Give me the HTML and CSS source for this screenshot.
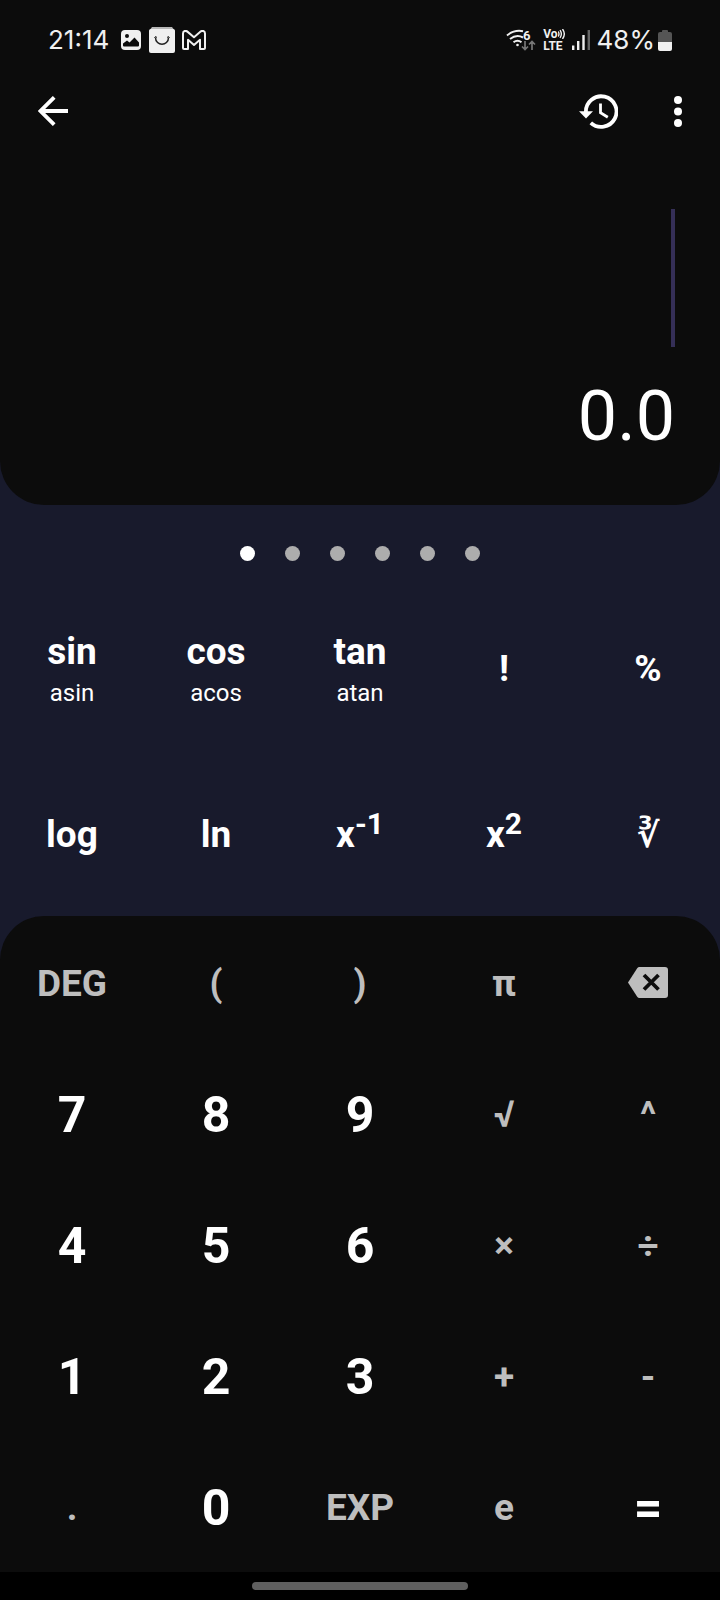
FILE: index.html
```html
<!DOCTYPE html>
<html lang="en">

<head>
  <meta charset="UTF-8">
  <meta name="viewport" content="width=device-width, initial-scale=1.0">
  <title>Calculator</title>

  <link rel="stylesheet" href="styles.css">
</head>

<body>
  <section class="screen">
    <div class="status-bar">
      <div class="status-left">
        <time>21:14</time>
        <svg class="photo-icon" width="20" height="20" viewBox="0 0 20 20">
          <rect width="20" height="20" rx="4" fill="#f0f0f0" />
          <circle cx="6" cy="6" r="2" fill="#0c0c0c" />
          <path d="M2 15.500v-2l4-3 2.500 2 5-5 4.500 5v3q0 1-1 1H3q-1 0-1-1z" fill="#0c0c0c" />
        </svg>
        <svg class="bag-icon" width="26" height="26" viewBox="0 0 26 26">
          <path d="M3 0h20l3 4H0z" fill="#b8b8b8" />
          <rect y="2" width="26" height="24" rx="2" fill="#f0f0f0" />
          <path d="M6.500 10.500c0 9 13 9 13 0" fill="none" stroke="#222" stroke-width="1.500" />
          <path d="M5.500 11l1-1.500 1.500 1M18 10.500l1.500-1 1 1.500" fill="none" stroke="#222" />
        </svg>
        <svg class="mail-icon" width="24" height="20" viewBox="0 0 24 20">
          <path d="M1 18V3.500C1 .800 3.800.300 5.400 1.600L12 7.200l6.600-5.600C20.200.300 23 .800 23 3.500V18q0 1-1 1h-4V9.800L12 15 6 9.800V19H2q-1 0-1-1z" fill="none" stroke="#f0f0f0" stroke-width="2" stroke-linejoin="round" />
        </svg>
      </div>
      <div class="status-right">
        <svg width="30" height="24" viewBox="0 0 30 24" fill="none" stroke="#f0f0f0" stroke-width="2">
          <path d="M1 7.500Q8 1.500 17 3.200M4 11q6.500-5 13-1.500M7.500 14.300q4-3 8 0" />
          <circle cx="11.500" cy="17" r="1.300" fill="#f0f0f0" stroke="none" />
          <path d="M19 13v8M16 18.500l3 3 3-3M26 22v-8M23 16.500l3-3 3 3" stroke="#777" stroke-width="1.700" />
          <text class="wifi-gen" x="17" y="12">6</text>
        </svg>
        <div class="volte">
          <span>Vo<svg width="7" height="10" viewBox="0 0 7 10" fill="none" stroke="#f0f0f0" stroke-width="1.400"><path d="M0 2.500q2 2.500 0 5M2 1.200q2.700 3.800 0 7.600M4.500 0q3.600 5 0 10" /></svg></span>
          <span>LTE</span>
        </div>
        <svg class="signal-icon" width="18" height="20" viewBox="0 0 18 20">
          <path d="M0 15.500h2.400V20H0zM5 11h2.400v9H5zM10.300 5h2.400v15h-2.400z" fill="#f0f0f0" />
          <path d="M15.600 0H18v20h-2.400z" fill="#666" />
        </svg>
        <span>48%</span>
        <svg class="battery-icon" width="14" height="21" viewBox="0 0 14 21">
          <path d="M4 2V1q0-1 1-1h4q1 0 1 1v1h2q2 0 2 2v8H0V4q0-2 2-2z" fill="#555" />
          <path d="M0 12h14v7q0 2-2 2H2q-2 0-2-2z" fill="#f0f0f0" />
        </svg>
      </div>
    </div>

    <header class="toolbar">
      <button class="icon-btn" aria-label="Back">
        <svg width="30" height="30" viewBox="0 0 30 30" fill="none" stroke="#fff" stroke-width="3.800">
          <path d="M30 15H3M16.200 1.300L2.500 15l13.700 13.700" />
        </svg>
      </button>
      <div class="toolbar-actions">
        <button class="icon-btn" aria-label="History">
          <svg width="39" height="35" viewBox="0 0 39 35" fill="none" stroke="#fff" stroke-width="3.800">
            <path d="M6.900 18A15.300 15.300 0 1 1 11.800 28.800" />
            <path d="M0 17.200h14l-7 7.300z" fill="#fff" stroke="none" />
            <path d="M21.500 9.500v9.300l7.300 4.400" stroke-width="2.800" />
          </svg>
        </button>
        <button class="icon-btn" aria-label="More options">
          <svg width="8" height="31" viewBox="0 0 8 31" fill="#fff">
            <circle cx="4" cy="4" r="4" />
            <circle cx="4" cy="15.500" r="4" />
            <circle cx="4" cy="27" r="4" />
          </svg>
        </button>
      </div>
    </header>

    <div class="display">
      <div class="expression">
        <input type="text" aria-label="Expression">
        <span class="caret"></span>
      </div>
      <output>0.0</output>
    </div>
  </section>

  <section class="functions">
    <div class="dots">
      <span class="dot active"></span>
      <span class="dot"></span>
      <span class="dot"></span>
      <span class="dot"></span>
      <span class="dot"></span>
      <span class="dot"></span>
    </div>
    <div class="function-grid">
      <button>sin<small>asin</small></button>
      <button>cos<small>acos</small></button>
      <button>tan<small>atan</small></button>
      <button>!</button>
      <button>%</button>
      <button>log</button>
      <button>ln</button>
      <button><span>x<sup>-1</sup></span></button>
      <button><span>x<sup>2</sup></span></button>
      <button class="cube-root">∛</button>
    </div>
  </section>

  <main class="keypad">
    <button>DEG</button>
    <button>(</button>
    <button>)</button>
    <button>π</button>
    <button class="delete" aria-label="Delete">
      <svg width="40" height="31" viewBox="0 0 40 31">
        <path d="M11.500 0H37q3 0 3 3v25q0 3-3 3H11.500q-1.500 0-2.300-1.200L0 15.500 9.200 1.200Q10 0 11.500 0z" fill="#bebebe" />
        <path d="M16 8l14.500 14.500M30.500 8L16 22.500" stroke="#0c0c0c" stroke-width="3.800" />
      </svg>
    </button>
    <button class="digit">7</button>
    <button class="digit">8</button>
    <button class="digit">9</button>
    <button>√</button>
    <button>^</button>
    <button class="digit">4</button>
    <button class="digit">5</button>
    <button class="digit">6</button>
    <button>×</button>
    <button>÷</button>
    <button class="digit">1</button>
    <button class="digit">2</button>
    <button class="digit">3</button>
    <button>+</button>
    <button>-</button>
    <button>.</button>
    <button class="digit">0</button>
    <button>EXP</button>
    <button>e</button>
    <button class="digit">=</button>
  </main>

  <footer class="nav-bar">
    <span class="nav-handle"></span>
  </footer>
</body>

</html>
```
FILE: styles.css
```css
* {
  box-sizing: border-box;
}

body {
  background: #181a2c;
  color: #fff;
  display: flex;
  flex-direction: column;
  font-family: Roboto, "DejaVu Sans", sans-serif;
  margin: 0;
  min-height: 100vh;
}

button {
  background: none;
  border: none;
  color: inherit;
  font-family: inherit;
  padding: 0;
}

button:hover {
  cursor: pointer;
}

svg {
  display: block;
}

/* top panel */
.screen {
  background: #0c0c0c;
  border-radius: 0 0 44px 44px;
  display: flex;
  flex: 1;
  flex-direction: column;
}

.status-bar {
  align-items: center;
  color: #f0f0f0;
  display: flex;
  font-family: Inter, sans-serif;
  font-size: 26px;
  height: 80px;
  justify-content: space-between;
  line-height: 32px;
  padding: 0 48px;
}

.status-left,
.status-right {
  align-items: center;
  display: flex;
  gap: 8px;
}

.photo-icon {
  margin-left: 4px;
}

.mail-icon {
  margin-left: -1px;
}

.status-right {
  gap: 7px;
}

.battery-icon {
  margin-left: -4px;
}

.wifi-gen {
  fill: #f0f0f0;
  font: bold 13px Roboto, sans-serif;
  stroke: none;
}

.volte {
  font: bold 12px/12px Roboto, sans-serif;
}

.volte span {
  align-items: center;
  display: flex;
}

.toolbar {
  align-items: center;
  display: flex;
  height: 62px;
  justify-content: space-between;
  padding: 0 38px;
}

.toolbar-actions {
  align-items: center;
  display: flex;
  gap: 56px;
}

.display {
  display: flex;
  flex: 1;
  flex-direction: column;
  justify-content: flex-end;
  padding: 0 45px 48px;
}

.expression {
  align-items: center;
  display: flex;
}

.expression input {
  background: none;
  border: none;
  color: #fff;
  flex: 1;
  font: 70px Roboto, sans-serif;
  min-width: 0;
  outline: none;
  text-align: right;
}

.caret {
  background: #352f57;
  height: 138px;
  width: 4px;
}

output {
  font-size: 70px;
  line-height: 82px;
  margin-top: 28px;
  text-align: right;
}

/* function pages */
.dots {
  display: flex;
  gap: 30px;
  justify-content: center;
  padding: 41px 0 23px;
}

.dot {
  background: #adadad;
  border-radius: 50%;
  height: 15px;
  width: 15px;
}

.dot.active {
  background: #fff;
}

.function-grid,
.keypad {
  display: grid;
  grid-template-columns: repeat(5, 1fr);
}

.function-grid {
  grid-auto-rows: 166px;
}

.function-grid button,
.keypad button {
  align-items: center;
  display: flex;
  flex-direction: column;
  font-size: 37px;
  font-weight: bold;
  justify-content: center;
  line-height: 44px;
}

.function-grid button {
  padding-top: 4px;
}

.function-grid small {
  font-size: 24px;
  font-weight: normal;
  line-height: 30px;
  margin-top: 4px;
}

.function-grid sup {
  font-size: 30px;
  line-height: 0;
}

.function-grid .cube-root {
  font-size: 34px;
}

/* number keys */
.keypad {
  background: #0c0c0c;
  border-radius: 44px 44px 0 0;
  grid-auto-rows: 131px;
  padding-top: 1px;
}

.keypad button {
  color: #bebebe;
  padding-top: 2px;
}

.keypad .digit {
  color: #fff;
  font-size: 50px;
}

.keypad .delete {
  padding-top: 0;
}

.nav-bar {
  align-items: center;
  background: #000;
  display: flex;
  height: 28px;
  justify-content: center;
}

.nav-handle {
  background: #5f5f5f;
  border-radius: 4px;
  height: 8px;
  width: 30%;
}
```
